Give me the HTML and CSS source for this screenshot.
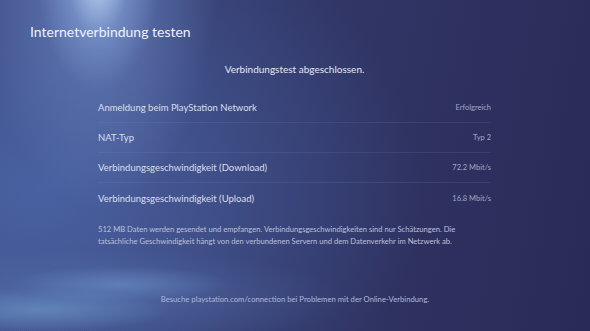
FILE: index.html
```html
<!DOCTYPE html>
<html lang="de">
<head>
   <meta charset="utf-8">
   <meta content="width=device-width, initial-scale=1.0" name="viewport">
   <title>Internetverbindung testen</title>
   <link rel="stylesheet" href="styles.css">
</head>
<body>
   <div id="screen">
      <div class="heading">
         <h1>Internetverbindung testen</h1>
      </div>
      <div id="content">
         <p class="status">Verbindungstest abgeschlossen.</p>
         <div class="results">
            <div class="row">
               <span class="label">Anmeldung beim PlayStation Network</span>
               <span class="value">Erfolgreich</span>
            </div>
            <div class="row">
               <span class="label">NAT-Typ</span>
               <span class="value">Typ 2</span>
            </div>
            <div class="row">
               <span class="label">Verbindungsgeschwindigkeit (Download)</span>
               <span class="value">72.2 Mbit/s</span>
            </div>
            <div class="row">
               <span class="label">Verbindungsgeschwindigkeit (Upload)</span>
               <span class="value">16.8 Mbit/s</span>
            </div>
         </div>
         <p class="note">512 MB Daten werden gesendet und empfangen. Verbindungsgeschwindigkeiten sind nur Schätzungen. Die tatsächliche Geschwindigkeit hängt von den verbundenen Servern und dem Datenverkehr im Netzwerk ab.</p>
      </div>
      <p class="footer">Besuche playstation.com/connection bei Problemen mit der Online-Verbindung.</p>
   </div>
</body>
</html>
```

FILE: styles.css
```css
* {
    margin: 0;
    padding: 0;
    box-sizing: border-box;
}
html, body {
    width: 590px;
    height: 331px;
    overflow: hidden;
}
body {
    font-family: Lato, "Noto Sans", sans-serif;
    color: #e6e9f5;
    background-color: #2c2d5a;
    background-image:
        radial-gradient(ellipse 60px 110px at 98px -20px, rgba(205, 228, 255, 0.8), rgba(160, 195, 245, 0.3) 50%, rgba(120, 150, 220, 0) 100%),
        radial-gradient(ellipse 120px 240px at 98px -30px, rgba(140, 170, 230, 0.5), rgba(110, 140, 210, 0) 100%),
        radial-gradient(ellipse 110px 18px at 120px 284px, rgba(120, 160, 215, 0.45), rgba(90, 120, 190, 0) 100%),
        radial-gradient(ellipse 130px 22px at 40px 310px, rgba(115, 160, 205, 0.55), rgba(90, 120, 190, 0) 100%),
        radial-gradient(ellipse 260px 50px at 90px 298px, rgba(100, 135, 195, 0.35), rgba(90, 120, 190, 0) 100%),
        radial-gradient(ellipse 380px 300px at 40px 190px, rgba(75, 100, 165, 0.9), rgba(60, 80, 140, 0) 100%),
        linear-gradient(100deg, #3c4980 0%, #323869 45%, #2a2a57 100%);
}
#screen {
    height: 331px;
    display: flex;
    flex-direction: column;
}
.heading {
    padding: 23px 0 0 30px;
}
.heading h1 {
    font-size: 14px;
    font-weight: 400;
    color: #eef1fa;
}
#content {
    padding: 0 99px 0 98px;
}
.status {
    text-align: center;
    font-size: 10px;
    margin-top: 23px;
    margin-bottom: 18px;
    color: #e4e7f3;
}
.row {
    display: flex;
    justify-content: space-between;
    align-items: center;
    height: 30px;
    border-bottom: 1px solid rgba(130, 140, 195, 0.16);
}
.row:last-child {
    border-bottom: 0;
}
.label {
    font-size: 9.5px;
    color: #dcdfee;
}
.value {
    font-size: 7.5px;
    color: #a4a8c6;
}
.note {
    margin-top: 10px;
    font-size: 7.6px;
    line-height: 12px;
    color: #bcc0da;
}
.footer {
    margin-top: auto;
    margin-bottom: 27px;
    text-align: center;
    font-size: 7.7px;
    color: #b0b8d8;
}
```
